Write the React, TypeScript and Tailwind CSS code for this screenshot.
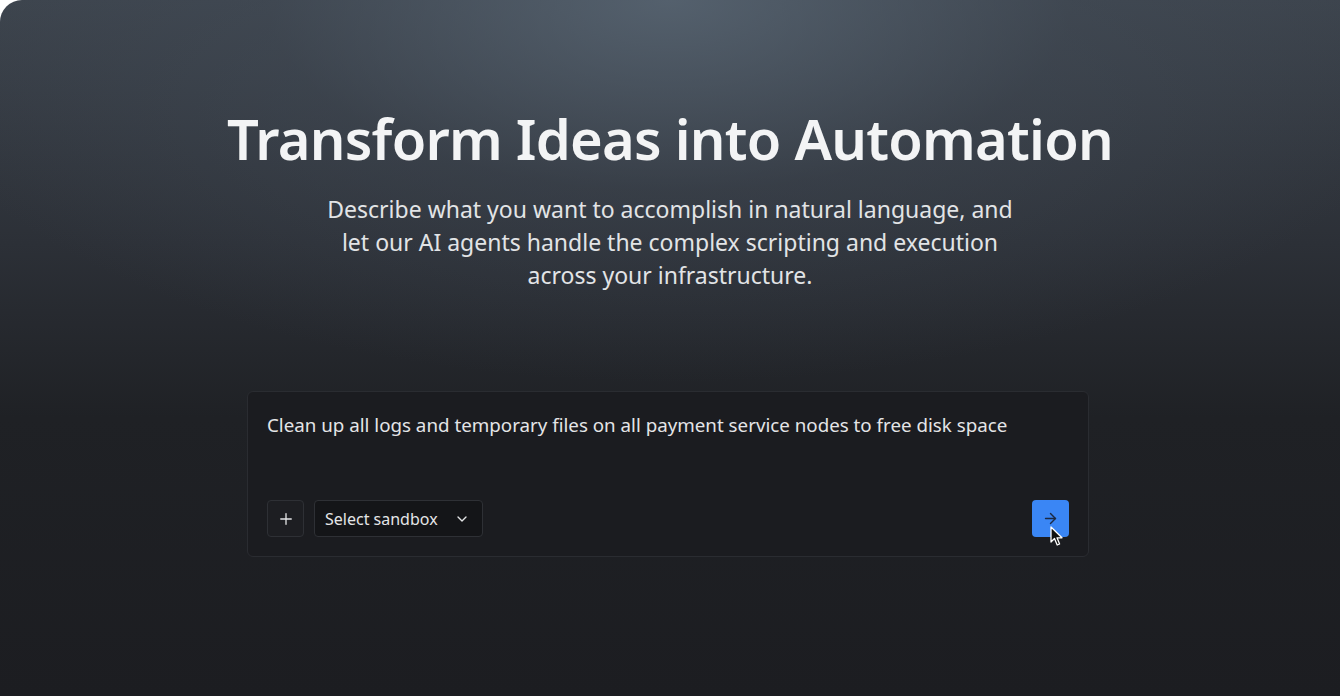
import { ChevronDown, Plus, ArrowRight } from "lucide-react";

function Cursor() {
  return (
    <svg
      width="14"
      height="21"
      viewBox="0 0 14 21"
      className="pointer-events-none absolute left-[18px] top-[26px]"
    >
      <path
        d="M1 1 L1 16 L4.5 12.5 L7.2 19 L9.6 18 L7 11.8 L12 11.8 Z"
        fill="#111"
        stroke="#fff"
        strokeWidth="1.3"
        strokeLinejoin="round"
      />
    </svg>
  );
}

function PromptBox() {
  return (
    <div className="w-[842px] h-[166px] -translate-x-[2px] rounded-[6px] border border-[#2a2c31] bg-[#1b1c20] px-[19px] pt-[19px] pb-[19px] flex flex-col justify-between">
      <p className="text-[18.75px] leading-[28px] text-[#e4e5e7]">
        Clean up all logs and temporary files on all payment service nodes to
        free disk space
      </p>
      <div className="flex items-center justify-between">
        <div className="flex items-center gap-[10px]">
          <button className="w-[37px] h-[37px] rounded-[4px] border border-[#2e3035] bg-[#1d1e22] flex items-center justify-center text-[#e4e5e7]">
            <Plus size={18} strokeWidth={1.75} />
          </button>
          <button className="h-[37px] w-[169px] rounded-[4px] border border-[#2e3035] bg-[#141518] pl-[10px] pr-[12px] flex items-center justify-between text-[16px] text-[#e4e5e7]">
            <span>Select sandbox</span>
            <ChevronDown size={16} strokeWidth={2} />
          </button>
        </div>
        <div className="relative">
          <button className="w-[37px] h-[37px] rounded-[4px] bg-[#3a86f5] flex items-center justify-center text-[#1b2a44]">
            <ArrowRight size={17} strokeWidth={2} />
          </button>
          <Cursor />
        </div>
      </div>
    </div>
  );
}

export default function App() {
  return (
    <div className="bg-white w-[1340px] h-[696px] overflow-hidden">
      <div
        className="rounded-tl-[22px] w-full h-full flex flex-col items-center bg-[radial-gradient(ellipse_60%_55%_at_50%_0%,rgba(92,106,120,0.75)_0%,rgba(70,80,92,0.35)_50%,rgba(40,44,50,0)_100%),linear-gradient(to_bottom,#3c434c_0%,#2c3037_35%,#1f2125_60%,#1c1d21_100%)] text-white"
        style={{ fontFamily: '"Noto Sans", "Open Sans", sans-serif' }}
      >
        <h1 className="mt-[104px] text-[56px] leading-[68px] font-semibold tracking-[-0.75px] text-[#f3f4f5]">
          Transform Ideas into Automation
        </h1>
        <p className="mt-[21px] w-[700px] text-center text-[23px] leading-[33px] text-[#e2e4e6]">
          Describe what you want to accomplish in natural language, and let our
          AI agents handle the complex scripting and execution across your
          infrastructure.
        </p>
        <div className="mt-[99px]">
          <PromptBox />
        </div>
      </div>
    </div>
  );
}
